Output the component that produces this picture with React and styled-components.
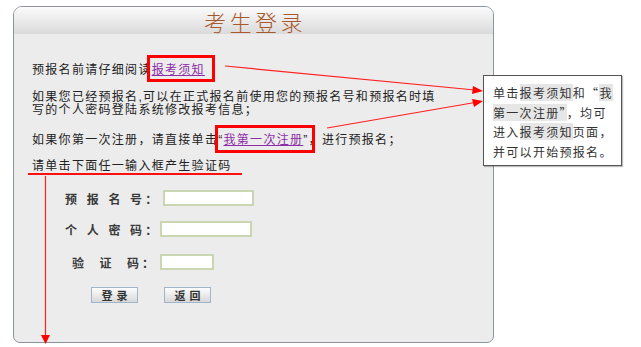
import React from 'react';
import styled, { createGlobalStyle } from 'styled-components';

const Global = createGlobalStyle`
  body {
    margin: 0;
    background: #fff;
    font-family: "Liberation Sans", "Noto Sans CJK SC", sans-serif;
  }
`;

const Stage = styled.div`
  position: relative;
  width: 641px;
  height: 347px;
  overflow: hidden;
  padding: 6px 0 0 13px;
  box-sizing: border-box;
`;

const Panel = styled.div`
  width: 481px;
  height: 337px;
  box-sizing: border-box;
  border: 1px solid #8a94a2;
  border-radius: 9px 9px 7px 7px;
  background: #ececec;
  overflow: hidden;
`;

const Header = styled.div`
  height: 27px;
  display: flex;
  align-items: center;
  justify-content: center;
  background: linear-gradient(#fbfbfb, #dadada);
  color: #a8582a;
  font-family: "Noto Sans CJK SC", sans-serif;
  font-weight: 300;
  font-size: 22px;
  letter-spacing: 3.5px;
  padding-left: 3px;
`;

const Body = styled.div`
  padding-left: 18px;
  color: #222;
  font-size: 12px;
  letter-spacing: 1.3px;
`;

const Line = styled.div`
  margin-top: ${p => p.top}px;
  line-height: ${p => p.lh || 20}px;
  height: ${p => (p.lh || 20) * (p.rows || 1)}px;
  white-space: nowrap;
`;

const Hint = styled.div`
  display: inline-block;
  margin-top: 10px;
  margin-left: -4px;
  padding: 0 10px 0 4px;
  line-height: 13px;
  border-bottom: 2px solid #ff1010;
  white-space: nowrap;
`;

const Marked = styled.span`
  position: relative;
  display: inline-block;
  line-height: 20px;
  &::after {
    content: "";
    position: absolute;
    top: ${p => p.t}px;
    bottom: ${p => p.b}px;
    left: ${p => p.l}px;
    right: ${p => p.r}px;
    border: 3px solid #f00;
  }
`;

const Link = styled.a`
  color: #8e2da8;
  text-decoration: underline;
`;

const Form = styled.div`
  margin-top: 15px;
  display: flex;
  flex-direction: column;
`;

const Row = styled.div`
  display: flex;
  align-items: center;
  height: 16px;
  margin-top: ${p => p.gap || 0}px;
  padding-left: ${p => p.indent}px;
`;

const Label = styled.span`
  display: flex;
  width: ${p => p.w}px;
  font-weight: bold;
  color: #3a3a3a;
  letter-spacing: 0;
  white-space: nowrap;
  font-family: "Noto Sans CJK SC", sans-serif;
`;

const Char = styled.span`
  margin-right: ${p => p.space}px;
`;

const Field = styled.input`
  width: ${p => p.w}px;
  height: 16px;
  box-sizing: border-box;
  border: 2px solid #cad5b2;
  background: #fff;
  padding: 0;
  outline: none;
`;

const Buttons = styled.div`
  display: flex;
  gap: 26px;
  margin-top: 17px;
  padding-left: 59px;
`;

const Button = styled.button`
  width: 47px;
  height: 16px;
  padding: 0;
  box-sizing: border-box;
  border: 1px solid #9fb5ca;
  background: linear-gradient(#fdfdfd, #d8d8d8);
  font-family: "Noto Sans CJK SC", sans-serif;
  font-size: 11px;
  font-weight: bold;
  line-height: 14px;
  letter-spacing: 4px;
  padding-left: 4px;
  color: #333;
`;

const Callout = styled.div`
  position: absolute;
  left: 483px;
  top: 75px;
  width: 139px;
  height: 91px;
  box-sizing: border-box;
  border: 1px solid #555;
  background: #fff;
  box-shadow: 1px 1px 1px rgba(0, 0, 0, 0.25);
  padding: 7px 0 0 9px;
  font-family: "Noto Sans CJK SC", sans-serif;
  font-size: 12px;
  letter-spacing: 1.3px;
  line-height: 19.5px;
  color: #333;
`;

const Hl = styled.span`
  background: #e6e6e6;
`;

const Overlay = styled.svg`
  position: absolute;
  left: 0;
  top: 0;
  pointer-events: none;
`;

function Arrows() {
  return (
    <Overlay width="641" height="347" viewBox="0 0 641 347">
      <g stroke="#ff2020" strokeWidth="1.2" fill="none">
        <line x1="225" y1="66" x2="475" y2="90" />
        <line x1="327" y1="128" x2="475" y2="102.5" />
        <line x1="45.5" y1="176" x2="45.5" y2="336" />
      </g>
      <g fill="#ff0000">
        <polygon points="483,91 473,86 472,94" />
        <polygon points="483,101 472,99 474,107" />
        <polygon points="45.5,344 41,335 50,335" />
      </g>
    </Overlay>
  );
}

function SpacedLabel({ text, space, w }) {
  const chars = text.split('');
  return (
    <Label w={w}>
      {chars.map((c, i) => (
        <Char key={i} space={i === chars.length - 1 ? 3 : space}>{c}</Char>
      ))}
      <span>：</span>
    </Label>
  );
}

const fields = [
  { text: '预报名号', space: 9.7, indent: 33, lw: 98, fw: 91, gap: 0 },
  { text: '个人密码', space: 9.7, indent: 33, lw: 95, fw: 92, gap: 15 },
  { text: '验证码', space: 15.5, indent: 40, lw: 88, fw: 54, gap: 17 },
];

export default function App() {
  return (
    <>
      <Global />
      <Stage>
        <Panel>
          <Header>考生登录</Header>
          <Body>
            <Line top={26}>
              预报名前请仔细阅读
              <Marked t={-5} b={-2} l={-5} r={-10}>
                <Link>报考须知</Link>
              </Marked>
            </Line>
            <Line top={11} lh={13} rows={2}>
              如果您已经预报名,可以在正式报名前使用您的预报名号和预报名时填
              <br />
              写的个人密码登陆系统修改报考信息；
            </Line>
            <Line top={13}>
              如果你第一次注册，请直接单击
              <Marked t={-5} b={-3} l={-3} r={-6}>
                “<Link>我第一次注册</Link>”
              </Marked>
              ，进行预报名；
            </Line>
            <Hint>请单击下面任一输入框产生验证码</Hint>
            <Form>
              {fields.map(f => (
                <Row key={f.text} indent={f.indent} gap={f.gap}>
                  <SpacedLabel text={f.text} space={f.space} w={f.lw} />
                  <Field w={f.fw} />
                </Row>
              ))}
            </Form>
            <Buttons>
              <Button>登录</Button>
              <Button>返回</Button>
            </Buttons>
          </Body>
        </Panel>
        <Callout>
          单击<Hl>报考须知</Hl>和“<Hl>我</Hl>
          <br />
          <Hl>第一次注册”</Hl>，均可
          <br />
          进入<Hl>报考须知</Hl>页面，
          <br />
          并可以开始预报名。
        </Callout>
        <Arrows />
      </Stage>
    </>
  );
}
